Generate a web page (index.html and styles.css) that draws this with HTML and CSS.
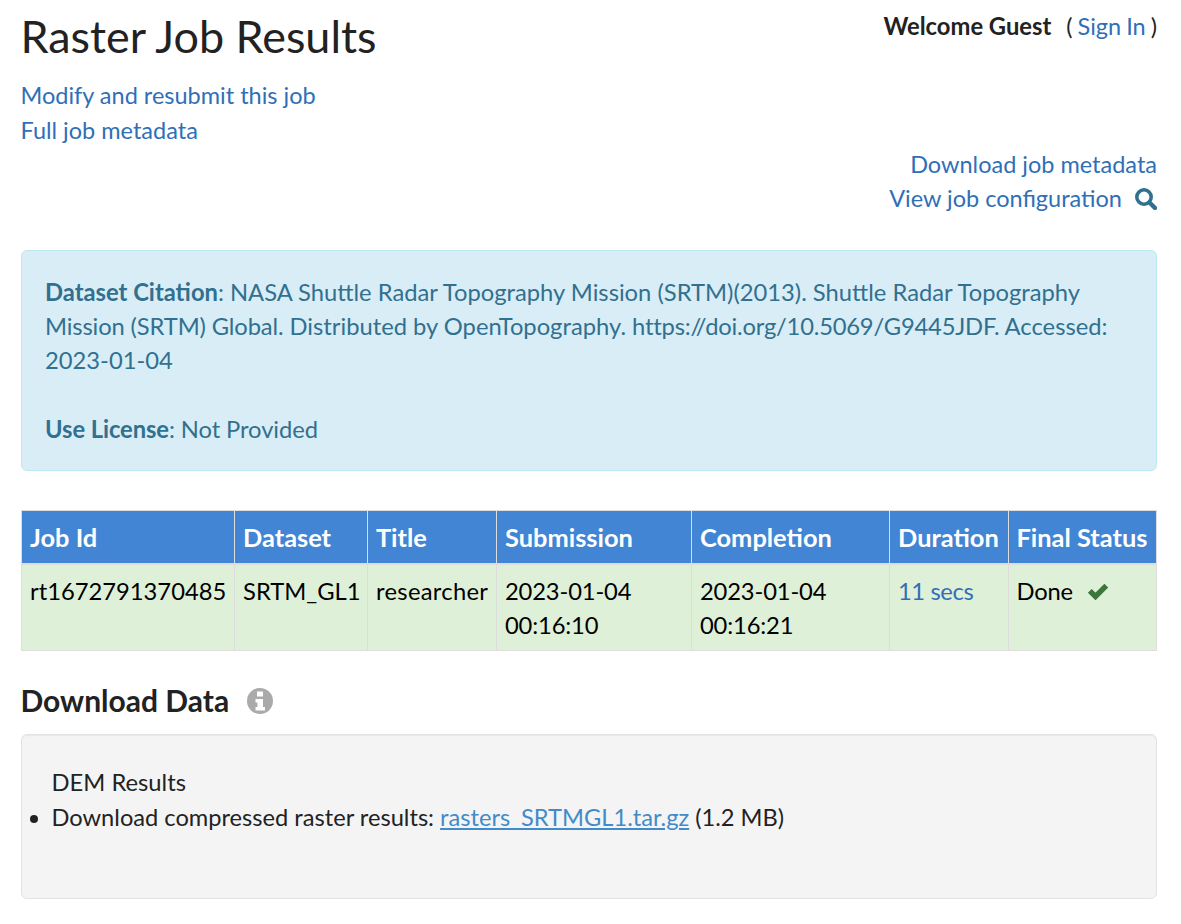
FILE: index.html
```html
<!DOCTYPE html>
<html lang="en">
<head>
<meta charset="utf-8">
<title>Raster Job Results</title>
<link rel="stylesheet" href="styles.css">
</head>
<body>
<div class="page">
  <header class="top">
    <h1 class="title">Raster Job Results</h1>
    <div class="welcome"><strong>Welcome Guest</strong><span class="sign">( <a href="#">Sign In</a> )</span></div>
  </header>
  <div class="links-left">
    <a href="#">Modify and resubmit this job</a>
    <a href="#">Full job metadata</a>
  </div>
  <div class="links-right">
    <a href="#">Download job metadata</a>
    <div class="config"><a href="#">View job configuration</a>
      <svg class="icon-search" viewBox="0 0 22 22" aria-hidden="true"><circle cx="9" cy="9" r="7.200" fill="none" stroke="currentColor" stroke-width="3.600"/><path d="M14.500 14.500l5.500 5.500" stroke="currentColor" stroke-width="4.400" stroke-linecap="round"/></svg>
    </div>
  </div>
  <div class="alert">
    <p><strong>Dataset Citation</strong>: NASA Shuttle Radar Topography Mission (SRTM)(2013). Shuttle Radar Topography <span class="tight">Mission (SRTM) Global.</span> Distributed by OpenTopography. <span class="tighter">https://doi.org/10.5069/G9445JDF.</span> Accessed: 2023-01-04</p>
    <p class="license"><strong>Use License</strong>: Not Provided</p>
  </div>
  <table class="jobs">
    <thead>
      <tr><th>Job Id</th><th>Dataset</th><th>Title</th><th>Submission</th><th>Completion</th><th>Duration</th><th>Final Status</th></tr>
    </thead>
    <tbody>
      <tr>
        <td>rt1672791370485</td>
        <td>SRTM_GL1</td>
        <td class="wide">researcher</td>
        <td class="date">2023-01-04 00:16:10</td>
        <td class="date">2023-01-04 00:16:21</td>
        <td class="dur"><a href="#">11 secs</a></td>
        <td class="status">Done <svg class="icon-check" viewBox="0 0 22 18" aria-hidden="true"><path d="M2.800 8.800l5.700 5.700L19.300 3.700" fill="none" stroke="currentColor" stroke-width="5.400"/></svg></td>
      </tr>
    </tbody>
  </table>
  <h3 class="section">Download Data <svg class="icon-info" viewBox="0 0 26 26" aria-hidden="true"><circle cx="13" cy="13" r="13" fill="currentColor"/><path d="M10 3.500h6v5h-6zM8.500 11h7.500v8h2v3.500H8.500V19h2v-4.500h-2z" fill="#fff"/></svg></h3>
  <div class="well">
    <div class="well-title">DEM Results</div>
    <ul>
      <li>Download compressed raster results: <a class="file" href="#">rasters_SRTMGL1.tar.gz</a> (1.2 MB)</li>
    </ul>
  </div>
</div>
</body>
</html>
```
FILE: styles.css
```css
* { box-sizing: border-box; }
html, body { margin: 0; background: #fff; }
body {
  font-family: Lato, "Liberation Sans", sans-serif;
  font-size: 23.75px;
  line-height: 34.3px;
  color: #222;
}
a { color: #2f6fb7; text-decoration: none; }
.page { padding: 0 24px 0 21px; }
.top { display: flex; justify-content: space-between; align-items: flex-start; }
.title {
  margin: 11px 0 0 -0.5px;
  font-size: 44.9px;
  line-height: 51px;
  font-weight: 400;
}
.welcome { margin-top: 9px; font-size: 23.5px; }
.welcome strong { font-size: 23.75px; font-weight: 700; }
.sign { margin-left: 15px; word-spacing: -1px; }
.links-left { margin: 16px 0 0 -0.5px; display: flex; flex-direction: column; font-size: 23.5px; }
.links-left a { height: 34.6px; }
.links-right { display: flex; flex-direction: column; align-items: flex-end; font-size: 23.5px; }
.config { display: flex; align-items: center; }
.icon-search { width: 22px; height: 22px; margin-left: 13px; color: #31708f; }
.alert {
  margin-top: 34px;
  padding: 24px 23px 23px;
  background: #d9edf7;
  border: 1px solid #bce8f1;
  border-radius: 6px;
  color: #31708f;
  height: 221px;
}
.alert p { margin: 0; }
.alert .license { margin-top: 34.3px; letter-spacing: -0.08px; }
.tight { letter-spacing: -0.13px; }
.tighter { letter-spacing: -0.2px; }
.jobs {
  margin-top: 39px;
  width: 100%;
  table-layout: fixed;
  border-collapse: collapse;
}
.jobs th, .jobs td {
  border: 1px solid #ddd;
  padding: 9px 8px 7px;
  text-align: left;
  vertical-align: top;
}
.jobs th:nth-child(1) { width: 213px; }
.jobs th:nth-child(2) { width: 133px; }
.jobs th:nth-child(3) { width: 129px; }
.jobs th:nth-child(4) { width: 195px; }
.jobs th:nth-child(5) { width: 198px; }
.jobs th:nth-child(6) { width: 119px; }
.jobs th {
  background: #4285d4;
  color: #fff;
  font-size: 25.4px;
  font-weight: 700;
  padding: 9px 8px 9px;
  border-bottom-width: 2px;
  white-space: nowrap;
}
.jobs th:nth-child(7) { padding-left: 7.500px; }
.jobs td { background: #dff0d8; color: #000; }
.jobs .wide { letter-spacing: 0.3px; }
.jobs .date { letter-spacing: -0.15px; }
.jobs .dur { letter-spacing: -0.4px; }
.jobs .status { padding-left: 7.500px; letter-spacing: -0.2px; }
.icon-check { width: 22px; height: 18px; margin-left: 8px; color: #3c763d; }
.section {
  margin: 33px 0 0 -0.5px;
  font-size: 30px;
  line-height: 33px;
  font-weight: 700;
  display: flex;
  align-items: center;
}
.icon-info { width: 26px; height: 26px; margin: 2px 0 0 18px; color: #aaa; }
.well {
  margin-top: 17px;
  height: 165px;
  padding: 30px 19px 19px 29.500px;
  background: #f4f4f4;
  border: 1px solid #e3e3e3;
  border-radius: 6px;
  box-shadow: inset 0 1px 1px rgba(0,0,0,.05);
}
.well ul { margin: 0; padding: 0; list-style-position: outside; }
.well li { margin: 1px 0 0; font-size: 23.65px; }
.file { color: #428bca; text-decoration: underline; }
```
